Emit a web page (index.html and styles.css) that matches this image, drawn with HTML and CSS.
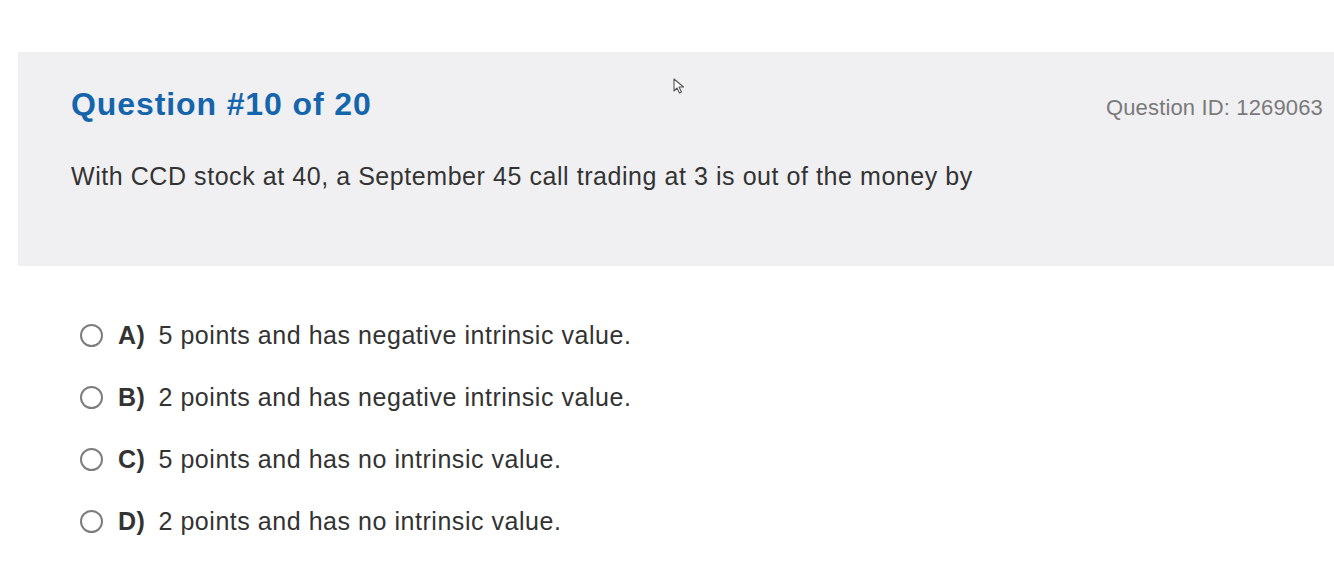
FILE: index.html
```html
<!DOCTYPE html>
<html>
<head>
<meta charset="utf-8">
<link rel="stylesheet" href="styles.css">
</head>
<body>
<div class="page">
  <section class="panel">
    <div class="head">
      <h1 class="title">Question #10 of 20</h1>
      <span class="qid">Question ID: 1269063</span>
    </div>
    <p class="stem">With CCD stock at 40, a September 45 call trading at 3 is out of the money by</p>
    <svg class="cursor" width="12" height="16" viewBox="0 0 12 16"><path d="M1 1 L1 13 L4 10 L6.5 15 L8.5 14 L6 9 L10.5 9 Z" fill="#fff" stroke="#555" stroke-width="1.1" stroke-linejoin="round"/></svg>
  </section>
  <ul class="options">
    <li class="opt"><span class="radio"></span><b class="letter">A)</b><span>5 points and has negative intrinsic value.</span></li>
    <li class="opt"><span class="radio"></span><b class="letter">B)</b><span>2 points and has negative intrinsic value.</span></li>
    <li class="opt"><span class="radio"></span><b class="letter">C)</b><span>5 points and has no intrinsic value.</span></li>
    <li class="opt"><span class="radio"></span><b class="letter">D)</b><span>2 points and has no intrinsic value.</span></li>
  </ul>
</div>
</body>
</html>
```
FILE: styles.css
```css
html, body { margin: 0; padding: 0; background: #fff; }
body { font-family: "Liberation Sans", Arial, sans-serif; color: #333; overflow: hidden; }
.page { width: 1334px; height: 574px; padding-top: 52px; box-sizing: border-box; }
.panel {
  position: relative;
  margin-left: 18px;
  height: 214px;
  background: #f0f0f2;
  box-sizing: border-box;
  padding: 30px 11px 0 53px;
}
.head { display: flex; justify-content: space-between; align-items: baseline; }
.title { margin: 0; font-size: 32px; letter-spacing: 0.9px; font-weight: bold; color: #1465ac; line-height: 44px; }
.qid { font-size: 22px; letter-spacing: 0.15px; color: #7a7a7a; }
.stem { margin: 35px 0 0; font-size: 25px; letter-spacing: 0.56px; line-height: 30px; color: #333; }
.cursor { position: absolute; left: 655px; top: 26px; }
.options { list-style: none; margin: 0; padding: 54px 0 0 80px; display: flex; flex-direction: column; gap: 32px; }
.opt { display: flex; align-items: center; font-size: 25px; letter-spacing: 0.54px; line-height: 30px; color: #333; }
.radio { width: 19px; height: 19px; border: 2px solid #7d7d7d; border-radius: 50%; background: #fff; margin-right: 15px; flex: none; }
.letter { font-weight: bold; margin-right: 13px; }
```
